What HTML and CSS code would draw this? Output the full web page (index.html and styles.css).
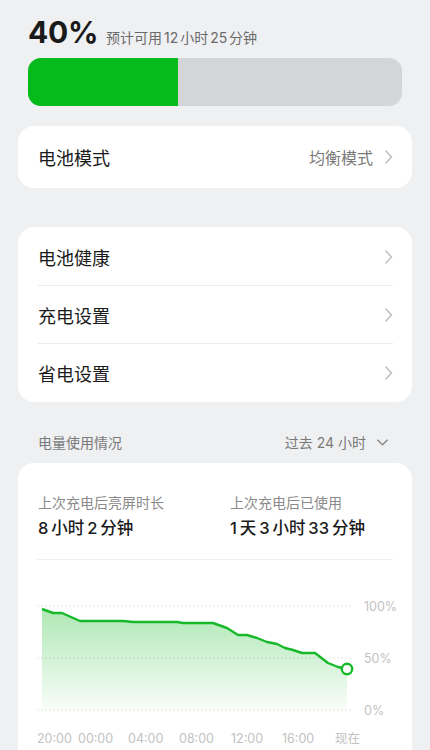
FILE: index.html
```html
<!DOCTYPE html>
<html lang="zh-CN">
<head>
    <meta charset="UTF-8">
    <meta name="viewport" content="width=device-width, initial-scale=1.0">
    <title>电池</title>
    <link rel="stylesheet" href="styles.css">
</head>
<body>
    <div class="page">
        <header class="level">
            <div class="level-text">
                <span class="percent">40%</span>
                <span class="remain">预计可用 12 小时 25 分钟</span>
            </div>
            <div class="bar">
                <div class="bar-fill"></div>
            </div>
        </header>

        <section class="card mode-card">
            <div class="row">
                <span class="row-title">电池模式</span>
                <span class="row-value">均衡模式</span>
                <svg class="chevron" viewBox="0 0 9 16"><path d="M1.5 1.5 L7.5 8 L1.5 14.5"/></svg>
            </div>
        </section>

        <section class="card list-card">
            <div class="row">
                <span class="row-title">电池健康</span>
                <svg class="chevron" viewBox="0 0 9 16"><path d="M1.5 1.5 L7.5 8 L1.5 14.5"/></svg>
            </div>
            <div class="row">
                <span class="row-title">充电设置</span>
                <svg class="chevron" viewBox="0 0 9 16"><path d="M1.5 1.5 L7.5 8 L1.5 14.5"/></svg>
            </div>
            <div class="row">
                <span class="row-title">省电设置</span>
                <svg class="chevron" viewBox="0 0 9 16"><path d="M1.5 1.5 L7.5 8 L1.5 14.5"/></svg>
            </div>
        </section>

        <div class="section-head">
            <span>电量使用情况</span>
            <span class="range">过去 24 小时
                <svg class="chevron-down" viewBox="0 0 14 9"><path d="M1.5 1.5 L7 7 L12.5 1.5"/></svg>
            </span>
        </div>

        <section class="card usage-card">
            <div class="stats">
                <div class="stat">
                    <div class="stat-label">上次充电后亮屏时长</div>
                    <div class="stat-value">8 小时 2 分钟</div>
                </div>
                <div class="stat">
                    <div class="stat-label">上次充电后已使用</div>
                    <div class="stat-value">1 天 3 小时 33 分钟</div>
                </div>
            </div>

            <svg class="chart" viewBox="37 595 356 155" width="356" height="155">
                <defs>
                    <linearGradient id="fade" x1="0" y1="0" x2="0" y2="1">
                        <stop offset="0" stop-color="#2cc23c" stop-opacity="0.38"/>
                        <stop offset="1" stop-color="#2cc23c" stop-opacity="0.03"/>
                    </linearGradient>
                </defs>
                <g class="grid">
                    <line x1="37" y1="605" x2="353" y2="605"/>
                    <line x1="37" y1="657" x2="353" y2="657"/>
                    <line x1="37" y1="709" x2="353" y2="709"/>
                </g>
                <polygon fill="url(#fade)" points="42,608 53,612 62,612 80,620 123,620 133,621 177,621 183,622 213,622 227,627 238,634 247,634 257,637 267,641 277,643 285,647 293,649 302,652 315,652 328,662 338,666 347,668 347,709 42,709"/>
                <polyline class="line" points="42,608 53,612 62,612 80,620 123,620 133,621 177,621 183,622 213,622 227,627 238,634 247,634 257,637 267,641 277,643 285,647 293,649 302,652 315,652 328,662 338,666 347,668"/>
                <circle class="dot" cx="347" cy="668" r="5.2"/>
                <g class="axis">
                    <text x="364" y="610">100%</text>
                    <text x="364" y="662">50%</text>
                    <text x="364" y="714">0%</text>
                    <text x="37" y="742">20:00</text>
                    <text x="78" y="742">00:00</text>
                    <text x="128" y="742">04:00</text>
                    <text x="179" y="742">08:00</text>
                    <text x="231" y="742">12:00</text>
                    <text x="282" y="742">16:00</text>
                    <text x="335" y="742">现在</text>
                </g>
            </svg>
        </section>
    </div>
</body>
</html>
```

FILE: styles.css
```css
body {
    margin: 0;
    padding: 0;
    background-color: #eff0f2;
    font-family: Inter, "Noto Sans CJK SC", sans-serif;
    color: #1a1a1a;
}

.page {
    padding: 0 18px;
}

.level {
    padding: 14px 10px 0;
}

.level-text {
    display: flex;
    align-items: baseline;
    height: 36px;
    line-height: 36px;
}

.percent {
    font-size: 30px;
    font-weight: 700;
    letter-spacing: -0.3px;
}

.remain {
    margin-left: 8px;
    font-size: 14px;
    line-height: 20px;
    word-spacing: -2px;
    color: #6b6b6b;
}

.bar {
    margin-top: 8px;
    height: 48px;
    border-radius: 13px;
    background-color: #d4d5d8;
    overflow: hidden;
}

.bar-fill {
    width: 40%;
    height: 100%;
    background-color: #05ba1b;
}

.card {
    background-color: #fff;
    border-radius: 16px;
}

.mode-card {
    margin-top: 20px;
}

.list-card {
    margin-top: 39px;
    padding: 1px 0;
}

.row {
    display: flex;
    align-items: center;
    height: 62px;
    margin: 0 19px 0 20px;
}

.list-card .row {
    height: 57px;
    border-bottom: 1px solid #ececec;
}

.list-card .row:last-child {
    border-bottom: none;
}

.row-title {
    flex: 1;
    font-size: 18px;
}

.row-value {
    font-size: 16px;
    color: #7a7a7a;
    margin-right: 11px;
}

.chevron {
    width: 9px;
    height: 16px;
    fill: none;
    stroke: #bdbdbd;
    stroke-width: 1.4;
}

.section-head {
    display: flex;
    justify-content: space-between;
    align-items: center;
    height: 40px;
    margin-top: 20px;
    padding: 0 23px 0 20px;
    font-size: 14px;
    color: #7a7a7a;
}

.range {
    display: flex;
    align-items: center;
}

.chevron-down {
    width: 13px;
    height: 9px;
    margin-left: 10px;
    fill: none;
    stroke: #8a8a8a;
    stroke-width: 1.6;
}

.usage-card {
    margin-top: 1px;
    padding: 30px 19px 0 19px;
    border-radius: 16px 16px 0 0;
}

.stats {
    display: flex;
    padding: 0 0 19px 1px;
    border-bottom: 1px solid #efefef;
}

.stat {
    flex: none;
    width: 192px;
}

.stat:last-child {
    flex: 1;
    width: auto;
}

.stat-label {
    font-size: 14px;
    line-height: 20px;
    color: #8a8a8a;
}

.stat-value {
    margin-top: 3px;
    font-size: 16.5px;
    line-height: 24px;
    font-weight: 500;
    word-spacing: -1.5px;
}

.chart {
    display: block;
    margin-top: 36px;
    overflow: visible;
}

.grid line {
    stroke: #e4e4e4;
    stroke-width: 1;
    stroke-dasharray: 2 2;
}

.line {
    fill: none;
    stroke: #17b82a;
    stroke-width: 2.4;
    stroke-linejoin: round;
}

.dot {
    fill: #fff;
    stroke: #17b82a;
    stroke-width: 2.4;
}

.axis text {
    font-family: Inter, "Noto Sans CJK SC", sans-serif;
    font-size: 12.5px;
    fill: #c2c2c2;
}
```
